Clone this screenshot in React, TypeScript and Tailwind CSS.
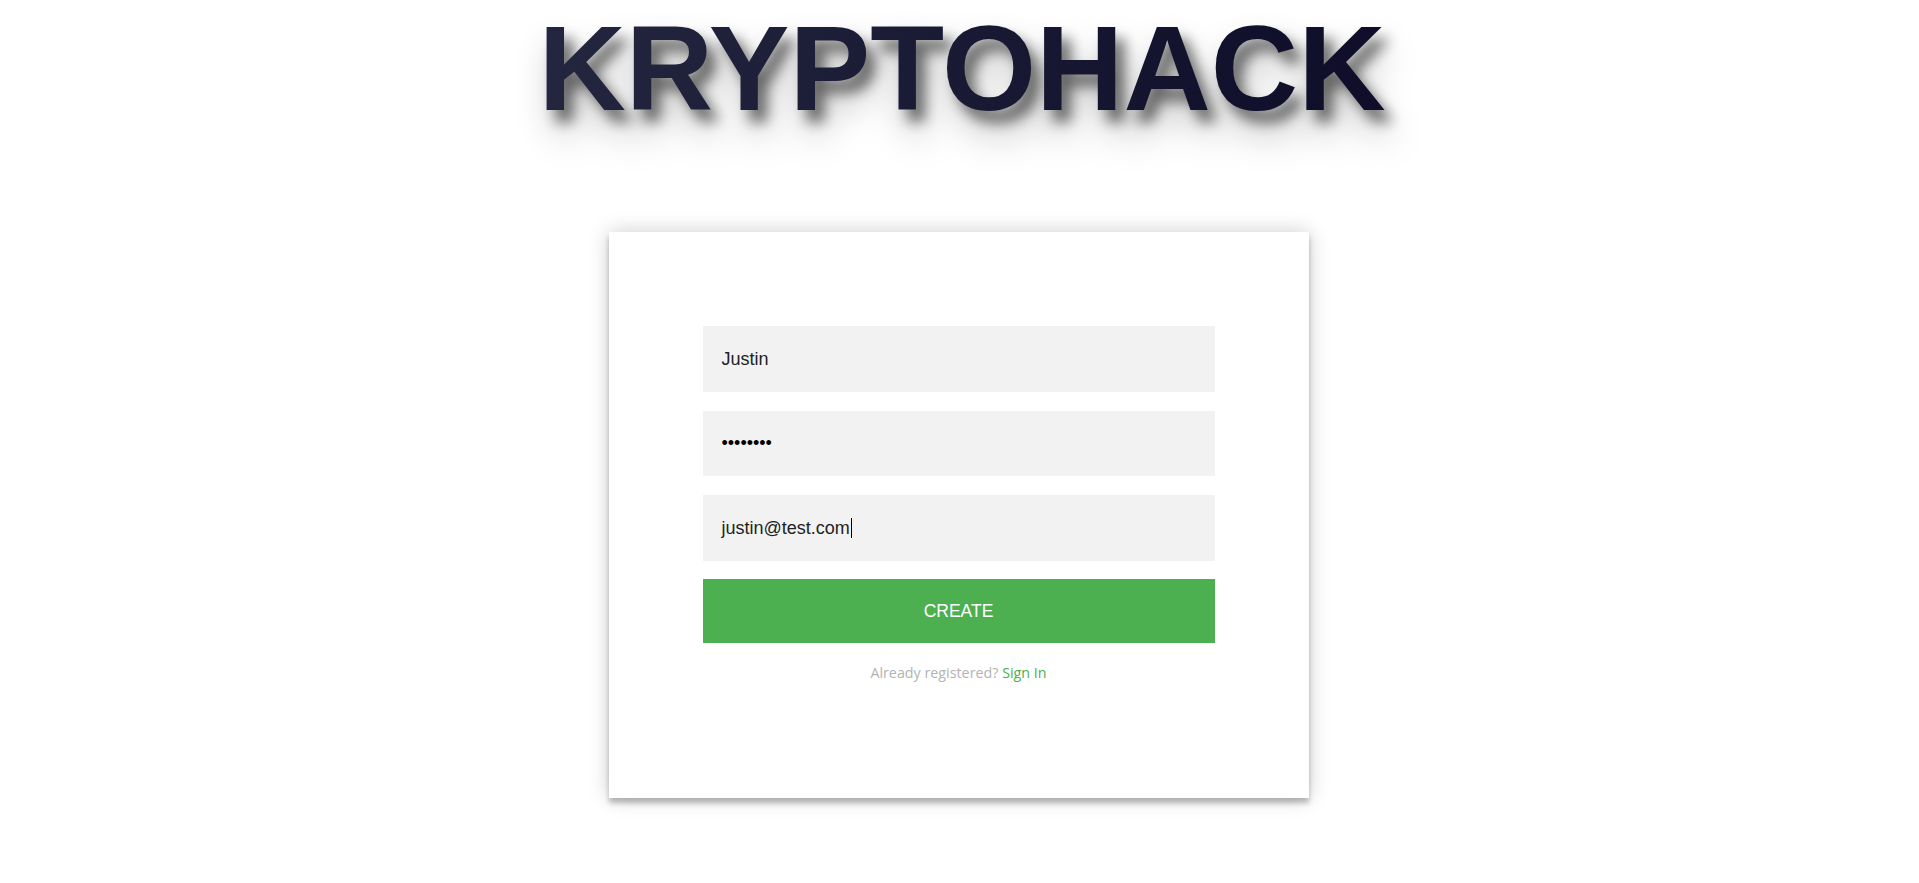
import React from "react";

export default function App() {
  return (
    <div className="min-h-screen w-full bg-white flex flex-col items-center" style={{ fontFamily: '"Liberation Sans", Arial, sans-serif' }}>
      <div className="pt-[8px] pl-[5px]">
        <h1
          className="text-[121px] leading-[120px] font-bold bg-gradient-to-r from-[#24263f] to-[#0f0d29] bg-clip-text text-transparent [filter:drop-shadow(9px_12px_7px_rgba(0,0,0,0.55))_drop-shadow(4px_18px_16px_rgba(0,0,0,0.22))]"
          style={{ fontFamily: '"Liberation Sans", Arial, sans-serif' }}
        >
          KRYPTOHACK
        </h1>
      </div>

      <div className="mt-[104px] mr-[2px] w-[700px] h-[566px] bg-white shadow-[0_0_20px_rgba(0,0,0,0.2),0_5px_5px_rgba(0,0,0,0.24)] pt-[94px] flex flex-col items-center">
        <div className="w-[512px] flex flex-col">
          <div className="h-[66px] bg-[#f2f2f2] flex items-center px-[19px] text-[18px] text-[#222]">Justin</div>
          <div className="mt-[19px] h-[65px] bg-[#f2f2f2] flex items-center px-[19px] text-[18px] text-black">••••••••</div>
          <div className="mt-[19px] h-[66px] bg-[#f2f2f2] flex items-center px-[19px] text-[18px] text-[#222]">
            <span>justin@test.com</span>
            <span className="inline-block w-[1px] h-[20px] bg-black ml-[1px]" />
          </div>
          <div className="mt-[18px] h-[64px] bg-[#4caf50] flex items-center justify-center text-white text-[17.5px] uppercase">
            Create
          </div>
          <div
            className="mt-[20px] text-center text-[14.3px] leading-[20px] text-[#b3b3b3]"
            style={{ fontFamily: '"Open Sans", "Noto Sans", sans-serif' }}
          >
            Already registered? <span className="text-[#4caf50]">Sign In</span>
          </div>
        </div>
      </div>
    </div>
  );
}
